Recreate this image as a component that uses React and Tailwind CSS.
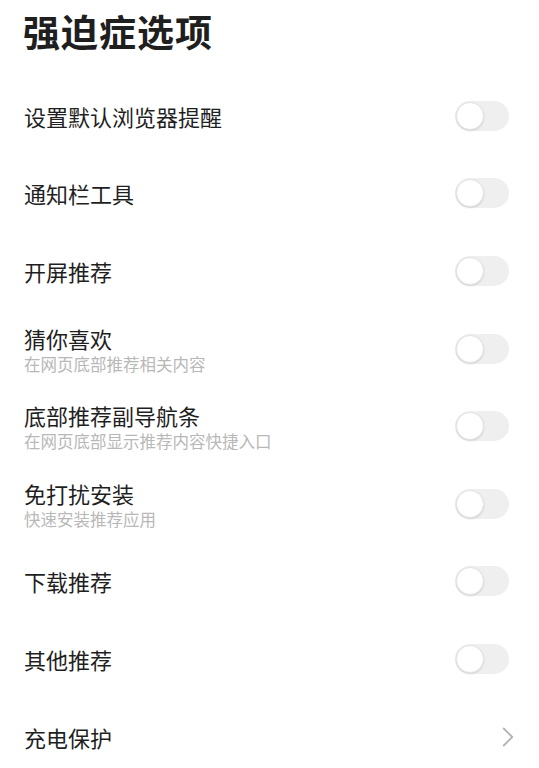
import { ChevronRight } from "lucide-react";

const rows = [
  { title: "设置默认浏览器提醒" },
  { title: "通知栏工具" },
  { title: "开屏推荐" },
  { title: "猜你喜欢", sub: "在网页底部推荐相关内容" },
  { title: "底部推荐副导航条", sub: "在网页底部显示推荐内容快捷入口" },
  { title: "免打扰安装", sub: "快速安装推荐应用" },
  { title: "下载推荐" },
  { title: "其他推荐" },
];

function Toggle() {
  return (
    <div className="w-[54px] h-[30px] rounded-full bg-[#efefef] p-[1px] flex items-center">
      <div className="w-[28px] h-[28px] rounded-full bg-white border border-[#e4e4e4] shadow-[0_1px_2px_rgba(0,0,0,0.12)]" />
    </div>
  );
}

export default function App() {
  return (
    <div
      className="w-[539px] h-[768px] bg-white overflow-hidden text-[#1f1f1f]"
      style={{ fontFamily: '"Noto Sans CJK SC", "Noto Sans", sans-serif' }}
    >
      <div className="h-[77px] pl-[23px] pt-[6px]">
        <h1 className="text-[37px] font-semibold leading-[50px] tracking-[1px]">强迫症选项</h1>
      </div>

      {rows.map((r) => (
        <div key={r.title} className="h-[77.6px] flex items-center justify-between pl-[24px] pr-[30px]">
          <div className="flex flex-col">
            <span className="text-[22px] leading-[30px]">{r.title}</span>
            {r.sub && (
              <span className="text-[16.5px] leading-[22px] text-[#b8b8b8]">{r.sub}</span>
            )}
          </div>
          <Toggle />
        </div>
      ))}

      <div className="h-[77.6px] flex items-center justify-between pl-[24px] pr-[14px]">
        <span className="text-[22px] leading-[30px]">充电保护</span>
        <ChevronRight className="w-[34px] h-[34px] text-[#b4b4b4]" strokeWidth={1.3} />
      </div>
    </div>
  );
}
